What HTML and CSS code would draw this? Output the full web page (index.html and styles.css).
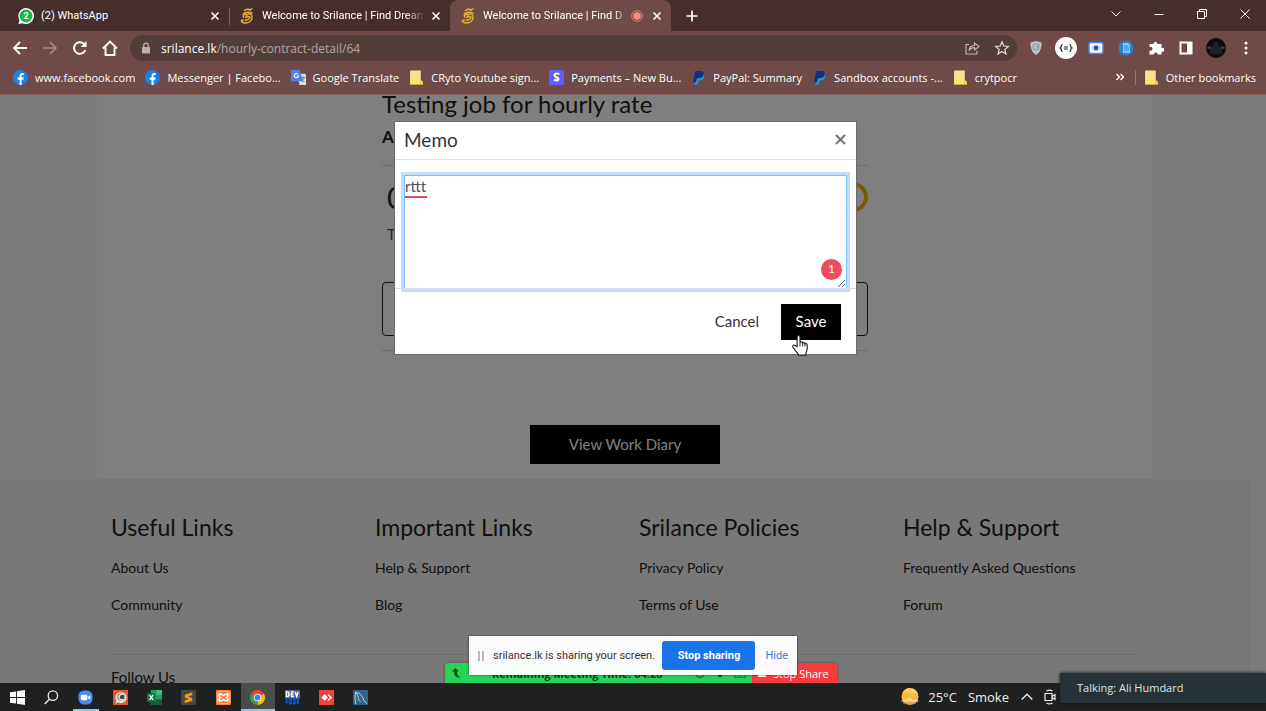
FILE: index.html
```html
<!DOCTYPE html>
<html lang="en">
<head>
  <meta charset="UTF-8" />
  <meta name="viewport" content="width=device-width, initial-scale=1.0"/>
  <title>Welcome to Srilance | Find Dream Jobs</title>
  <link rel="stylesheet" href="styles.css">
</head>
<body>
  <!-- shared icons -->
  <svg class="defs" aria-hidden="true">
    <symbol id="x" viewBox="0 0 10 10"><path d="M1.5 1.5l7 7M8.5 1.5l-7 7" fill="none" stroke="currentColor" stroke-width="1.6"/></symbol>
    <symbol id="facebook" viewBox="0 0 16 16"><circle cx="8" cy="8" r="8" fill="#1583ee"/><path d="M7 16v-5.600H5V8h2V6.300C7 4.200 8.200 3.100 10 3.100l1.500.1v2h-1c-1 0-1.300.6-1.300 1.200V8h2.200l-.4 2.400H9.200V16z" fill="#fff"/></symbol>
    <symbol id="folder" viewBox="0 0 12 14"><path d="M0 .5h10v9.500l2 1v2.500H0z" fill="#fbe08b"/><path d="M10 9l2 2v2.500H9z" fill="#f0c64d"/><path d="M0 13.500h12" stroke="#d8a82e"/></symbol>
    <symbol id="paypal" viewBox="0 0 14 14"><path d="M5 4h6.500c1.500 1 1 5.500-3.200 5.700H7L6.200 13.500H3z" fill="#2497d8"/><path d="M4 1h5c2.500 0 3.300 1.300 2.800 3.300C11.200 7 9.500 7.800 7 7.800H5.500L4.700 11.500H1.800z" fill="#10317f"/></symbol>
    <symbol id="srilance" viewBox="0 0 16 16"><path d="M5 3C6 1 10 .5 12 2.500M10 2.500L13.500.5M4 7c1-3.500 8-3.500 9.500-1.500M5 9.500C3.500 8 5 5.500 7 6.500s1 3-1 3M8.500 6.500c2-1.500 4.500-.5 4.500 2.500 0 4-3 6-6.500 6-3 0-4.500-1.500-4-2.500s2-.5 2.500 0M9 9.500C9 8 11 8 11 9.500S8 12 6 12.500" fill="none" stroke="#e5b431" stroke-width="1.400"/></symbol>
  </svg>

  <header class="browser">
    <nav class="tabs">
      <div class="tab">
        <svg class="favicon" viewBox="0 0 16 16"><path d="M8 0a8 8 0 1 1-3.500 15.200L.5 16l1-3.800A8 8 0 0 1 8 0z" fill="#fff"/><circle cx="8" cy="8" r="6.500" fill="#18b84a"/><text x="8" y="11.300" text-anchor="middle" font-size="9" font-weight="bold" fill="#fff">2</text></svg>
        <span class="tab-title">(2) WhatsApp</span>
        <button class="tab-close" aria-label="Close tab"><svg><use href="#x"/></svg></button>
      </div>
      <div class="tab divided">
        <svg class="favicon"><use href="#srilance"/></svg>
        <span class="tab-title fade">Welcome to Srilance | Find Dream</span>
        <button class="tab-close" aria-label="Close tab"><svg><use href="#x"/></svg></button>
      </div>
      <div class="tab active">
        <svg class="favicon"><use href="#srilance"/></svg>
        <span class="tab-title fade">Welcome to Srilance | Find D</span>
        <svg class="record" viewBox="0 0 12 12"><circle cx="6" cy="6" r="5.300" fill="none" stroke="#e8837a"/><circle cx="6" cy="6" r="3.800" fill="#f28b82"/></svg>
        <button class="tab-close" aria-label="Close tab"><svg><use href="#x"/></svg></button>
      </div>
      <button class="new-tab" aria-label="New tab"><svg viewBox="0 0 12 12"><path d="M6 .5v11M.5 6h11" stroke="#fff" stroke-width="1.700"/></svg></button>
      <div class="window-buttons">
        <button aria-label="Search tabs"><svg viewBox="0 0 12 12"><path d="M1.500 3.500L6 8l4.500-4.500"/></svg></button>
        <button aria-label="Minimize"><svg viewBox="0 0 12 12"><path d="M1.500 6.500h9"/></svg></button>
        <button aria-label="Restore"><svg viewBox="0 0 12 12"><path d="M1.500 3.500h7v7h-7zM3.500 3.500v-2h7v7h-2"/></svg></button>
        <button aria-label="Close"><svg viewBox="0 0 12 12"><path d="M1.500 1.500l9 9M10.500 1.500l-9 9"/></svg></button>
      </div>
    </nav>

    <div class="toolbar">
      <button class="tool" aria-label="Back"><svg viewBox="0 0 16 16"><path d="M15 8H2.500M8 2L2 8l6 6" fill="none" stroke="#fff" stroke-width="1.900"/></svg></button>
      <button class="tool" aria-label="Forward"><svg viewBox="0 0 16 16"><path d="M1 8h12.500M8 2l6 6-6 6" fill="none" stroke="#a38785" stroke-width="1.700"/></svg></button>
      <button class="tool" aria-label="Reload"><svg viewBox="0 0 16 16"><path d="M13.300 10A5.800 5.800 0 1 1 12 4" fill="none" stroke="#fff" stroke-width="1.900"/><path d="M14.500 1v6h-6z" fill="#fff"/></svg></button>
      <button class="tool" aria-label="Home"><svg viewBox="0 0 16 16"><path d="M3.500 7.500V15h9V7.500M1 8.500l7-7 7 7" fill="none" stroke="#fff" stroke-width="1.900"/></svg></button>
      <div class="address">
        <svg class="lock" viewBox="0 0 10 12"><path d="M1 5h8v6.500H1z" fill="#bcaeac"/><path d="M2.700 5V3.500a2.300 2.300 0 0 1 4.600 0V5" fill="none" stroke="#bcaeac" stroke-width="1.300"/></svg>
        <span class="url">srilance.lk<span>/hourly-contract-detail/64</span></span>
        <button class="tool" aria-label="Share"><svg viewBox="0 0 16 16"><path d="M5 4.500H2v9.500h11v-3.500M5 10.500c.5-3.500 2.500-5 5.500-5V3L15 6.500 10.500 10V7.500C8 7.500 6.500 8.500 5 10.500z" fill="none" stroke="#c9bab8" stroke-width="1.100"/></svg></button>
        <button class="tool" aria-label="Bookmark"><svg viewBox="0 0 16 16"><path d="M8 1.800l1.800 4.200 4.500.4-3.400 3 1 4.500L8 11.500l-3.900 2.400 1-4.500-3.400-3L6.200 6z" fill="none" stroke="#e6dddc" stroke-width="1.200"/></svg></button>
      </div>
      <button class="tool" aria-label="Brave shield"><svg viewBox="0 0 16 16"><path d="M8 1l5.500 1.500c.3 5-1 9.500-5.500 12.500C3.500 12 2.200 7.500 2.500 2.500z" fill="#b9c2cb"/><circle cx="8" cy="7" r="3" fill="none" stroke="#8e99a4" stroke-width="1.200"/><path d="M8 7h2" stroke="#7e8a96"/></svg></button>
      <button class="tool large" aria-label="JSON viewer"><svg viewBox="0 0 22 22"><circle cx="11" cy="11" r="11" fill="#fff"/><path d="M7.500 7.500c-2 0-.5 3-2.200 3.500 1.700.5.200 3.500 2.200 3.500M14.500 7.500c2 0 .5 3 2.200 3.500-1.700.5-.2 3.500-2.200 3.500M9 10h4M9 12h4" fill="none" stroke="#222" stroke-width="1.200"/></svg></button>
      <button class="tool" aria-label="Recorder"><svg viewBox="0 0 16 16"><rect x="1" y="2.500" width="14" height="11" rx="2" fill="#fff" stroke="#4285f4" stroke-width="1.500"/><rect x="3.500" y="5" width="9" height="6" fill="#d9e6fd"/><circle cx="8" cy="8" r="2.400" fill="#3048ce"/></svg></button>
      <button class="tool" aria-label="Docs"><svg viewBox="0 0 16 16"><circle cx="8" cy="8" r="7.500" fill="#2286d6"/><path d="M5 3h5l2 2v8H5z" fill="#82c7f6"/><path d="M6 6h4M6 8h5M6 10h5" stroke="#2286d6"/></svg></button>
      <button class="tool" aria-label="Extensions"><svg viewBox="0 0 16 16"><path d="M1.500 4h4a2 2 0 1 1 4 0h4v4a2 2 0 1 1 0 3.500v3H9.800a2 2 0 1 0-4 0H1.500v-4a2 2 0 1 0 0-3.500z" fill="#fff"/></svg></button>
      <button class="tool" aria-label="Side panel"><svg viewBox="0 0 16 16"><path d="M2.500 2.500h11v11h-11z" fill="none" stroke="#fff" stroke-width="2"/><path d="M9 2h5v12H9z" fill="#fff"/></svg></button>
      <button class="tool large" aria-label="Profile"><svg viewBox="0 0 22 22"><circle cx="11" cy="11" r="10" fill="#0e0d11"/><path d="M9 6.500a2 2 0 1 1 4 0V8l4 2v7H5v-7l4-2z" fill="#232228"/><path d="M2.500 11l3-.5M16.500 10.500l3 .5" stroke="#4c4950" stroke-width="2"/></svg></button>
      <button class="tool" aria-label="Menu"><svg viewBox="0 0 16 16"><g fill="#fff"><circle cx="8" cy="3" r="1.500"/><circle cx="8" cy="8" r="1.500"/><circle cx="8" cy="13" r="1.500"/></g></svg></button>
    </div>

    <nav class="bookmarks">
      <a href="#"><svg><use href="#facebook"/></svg>www.facebook.com</a>
      <a href="#"><svg><use href="#facebook"/></svg>Messenger | Facebo...</a>
      <a href="#"><svg viewBox="0 0 16 16"><path d="M6 4h9a1 1 0 0 1 1 1v11H9z" fill="#d7dce2"/><path d="M0 1a1 1 0 0 1 1-1h8l4 12H1a1 1 0 0 1-1-1z" fill="#4c82ee"/><path d="M7.500 4.500a2.300 2.300 0 1 0 .5 2H6" fill="none" stroke="#fff" stroke-width="1.100"/><path d="M10 8h5M12.500 7v1M14 8c-.5 2-1.500 3-3 4M11.500 10l2.500 3" fill="none" stroke="#647a94"/></svg>Google Translate</a>
      <a href="#"><svg><use href="#folder"/></svg>CRyto Youtube sign...</a>
      <a href="#"><svg viewBox="0 0 16 16"><rect width="16" height="16" rx="2" fill="#635bff"/><path d="M11 4.500C8.500 3.300 5.800 3.600 5.800 5.700c0 2.600 4.400 1.900 4.400 3.900 0 1.900-3.100 1.800-5 .6" fill="none" stroke="#fff" stroke-width="2.200"/></svg>Payments – New Bu...</a>
      <a href="#"><svg><use href="#paypal"/></svg>PayPal: Summary</a>
      <a href="#"><svg><use href="#paypal"/></svg>Sandbox accounts -...</a>
      <a href="#"><svg><use href="#folder"/></svg>crytpocr</a>
      <button class="more" aria-label="More bookmarks"><svg viewBox="0 0 10 10"><path d="M1.500 2l3 3-3 3M5.500 2l3 3-3 3" fill="none" stroke="#fff" stroke-width="1.400"/></svg></button>
      <a href="#" class="other"><svg><use href="#folder"/></svg>Other bookmarks</a>
    </nav>
  </header>

  <main class="page">
    <section class="contract">
      <div class="contract-inner">
        <h1>Testing job for hourly rate</h1>
        <p class="client">Al</p>
        <div class="timer">
          <span class="hours">0</span>
          <span class="toggle"></span>
        </div>
        <p class="today">T</p>
        <div class="memo-row">
          <div class="memo-box"></div>
        </div>
        <button class="diary">View Work Diary</button>
      </div>
    </section>

    <footer class="site-footer">
      <div class="footer-inner">
        <div class="footer-columns">
          <div>
            <h2>Useful Links</h2>
            <a href="#">About Us</a>
            <a href="#">Community</a>
          </div>
          <div>
            <h2>Important Links</h2>
            <a href="#">Help &amp; Support</a>
            <a href="#">Blog</a>
          </div>
          <div>
            <h2>Srilance Policies</h2>
            <a href="#">Privacy Policy</a>
            <a href="#">Terms of Use</a>
          </div>
          <div>
            <h2>Help &amp; Support</h2>
            <a href="#">Frequently Asked Questions</a>
            <a href="#">Forum</a>
          </div>
        </div>
        <p class="follow">Follow Us</p>
      </div>
    </footer>

    <div class="overlay">
      <div class="modal" role="dialog" aria-labelledby="memo-title">
        <div class="modal-header">
          <label id="memo-title" for="memo">Memo</label>
          <button class="modal-close" aria-label="Close"><svg><use href="#x"/></svg></button>
        </div>
        <div class="modal-body">
          <textarea id="memo" spellcheck="false">rttt</textarea>
          <span class="misspelled"></span>
          <span class="badge">1</span>
        </div>
        <div class="modal-footer">
          <button class="cancel">Cancel</button>
          <button class="save">Save</button>
          <svg class="pointer" viewBox="0 0 18 24"><path d="M6 13V3c0-2 3-2 3 0v6c.5-1.200 2.500-1 2.700.4.700-.8 2.300-.5 2.500.8.900-.6 2.300 0 2.300 1.300v4c0 2-1.500 3.500-1.500 6.500H7.500C6 18.500 3.500 17 1.500 13.500c-.7-1.500 1-2.500 2.500-1.500z" fill="#fff" stroke="#222" stroke-width="1.200"/><path d="M9 9v4M11.700 9.500v3.500M14.200 10.500V13" stroke="#222"/></svg>
        </div>
      </div>
    </div>
  </main>

  <div class="meeting">
    <div class="meeting-time">
      <svg viewBox="0 0 12 12"><path d="M1 4.500L4.500 1 8 4.500H5.800C5.800 8 7 9.500 10 10c-4 1.500-7-.5-7-5.500z" fill="#064d16"/></svg>
      <span>Remaining Meeting Time: 04:28</span>
      <svg viewBox="0 0 12 12"><circle cx="6" cy="6" r="4.500" fill="none" stroke="#13762f" stroke-width="1.300"/></svg>
      <svg viewBox="0 0 12 12"><path d="M2 1.500h8v5L6 11 2 6.500z" fill="#07591b"/></svg>
      <svg viewBox="0 0 14 12"><path d="M1 3h3l1-2h4l1 2h3v8H1zM5 6.500l2 2 3-3" fill="none" stroke="#13762f" stroke-width="1.300"/></svg>
    </div>
    <button class="stop-share"><span class="square"></span>Stop Share</button>
  </div>
  <div class="sharing">
    <span class="grip"></span>
    <span>srilance.lk is sharing your screen.</span>
    <button class="stop-sharing">Stop sharing</button>
    <a href="#">Hide</a>
  </div>

  <footer class="taskbar">
    <div class="apps">
      <button aria-label="Start"><svg viewBox="0 0 16 16"><path d="M0 2.500l6.500-1v6H0zM7.500 1.300L16 0v7.500H7.500zM0 8.500h6.500v6L0 13.500zM7.500 8.500H16V16l-8.500-1.300z" fill="#fff"/></svg></button>
      <button aria-label="Search"><svg viewBox="0 0 16 16"><circle cx="9.500" cy="6" r="5" fill="none" stroke="#eee" stroke-width="1.400"/><path d="M6 9.700L.8 15" stroke="#eee" stroke-width="1.500"/></svg></button>
      <button class="running" aria-label="Zoom"><svg viewBox="0 0 16 16"><rect x=".5" y=".5" width="15" height="15" rx="6" fill="#4a8cf7"/><rect x="3" y="5" width="7" height="6" rx="1.500" fill="#fff"/><path d="M10.500 7.500L13.200 5.500v5l-2.700-2z" fill="#fff"/></svg></button>
      <button aria-label="Recorder"><svg viewBox="0 0 16 16"><path d="M0 0h16v16H0z" fill="#e4582c"/><circle cx="8.500" cy="8" r="6" fill="#ddd"/><circle cx="8.500" cy="7.500" r="3.700" fill="#4b4440"/><path d="M11 5a3 3 0 1 0 0 5M3 14l3-3" fill="none" stroke="#eee" stroke-width="1.500"/></svg></button>
      <button aria-label="Excel"><svg viewBox="0 0 16 16"><path d="M4 0h12v16H4z" fill="#1d9f5d"/><path d="M10 0h6v5h-6z" fill="#35c481"/><path d="M4 10h12v6H4z" fill="#185c37"/><path d="M0 3.500h9v9H0z" fill="#107c41"/><path d="M2.700 5.500l3.800 5M6.500 5.500l-3.800 5" stroke="#fff" stroke-width="1.400"/></svg></button>
      <button aria-label="Sublime Text"><svg viewBox="0 0 16 16"><rect width="16" height="16" rx="1" fill="#474747"/><path d="M12 2.500v3L7.500 7l4.500 1.500v3L4 14v-3l4.500-1.500L4 8V5z" fill="#ff9800"/></svg></button>
      <button aria-label="XAMPP"><svg viewBox="0 0 16 16"><rect width="16" height="16" rx="1" fill="#ef7f33"/><rect x="1.500" y="1.500" width="13" height="13" rx="3" fill="none" stroke="#f9c49f"/><path d="M5.500 4.500h-2v2.500l1.500 1-1.500 1v2.500h2.500L8 10l2 1.500h2.500V9L11 8l1.500-1V4.500H10L8 6 6 4.500z" fill="none" stroke="#fff" stroke-width="1.700"/></svg></button>
      <button class="running current" aria-label="Chrome"><svg viewBox="0 0 16 16"><path d="M8 8L1.100 4A8 8 0 0 1 14.900 4z" fill="#e94335"/><path d="M8 8L14.900 4A8 8 0 0 1 8 16z" fill="#fbbc05"/><path d="M8 8L8 16A8 8 0 0 1 1.100 4z" fill="#34a353"/><circle cx="8" cy="8" r="4" fill="#fff"/><circle cx="8" cy="8" r="3.100" fill="#3a80f0"/></svg></button>
      <button aria-label="Dev-C++"><svg viewBox="0 0 16 16"><path d="M0 0h16v9H0z" fill="#5c6590"/><path d="M1.500 2v5h1c2.500 0 2.500-5 0-5zM9.500 2H7v5h2.500M7 4.500h2M11 2l1.500 5L14 2" fill="none" stroke="#fff" stroke-width="1.500"/><path d="M1 9h14v6l-3-1-2 2-2-2-3 2-2-2-2 1z" fill="#0b55cc"/><path d="M5 10.500H3v3h2M8 10v4M6 12h4M12 10v4" fill="none" stroke="#082354"/></svg></button>
      <button aria-label="AnyDesk"><svg viewBox="0 0 16 16"><path d="M0 0h16v16H0z" fill="#ef443b"/><path d="M6 4.500L9.500 8 6 11.500 2.500 8z" fill="#fff"/><path d="M9.500 4.700L12.800 8l-3.300 3.300" fill="none" stroke="#fff" stroke-width="1.400"/></svg></button>
      <button aria-label="MySQL Workbench"><svg viewBox="0 0 16 16"><rect width="16" height="16" rx="1" fill="#2d6686"/><path d="M3 15C2 10 2 5 3 2.500c5 0 7.500 5 8.500 8.500l3 3.500M3 2.500c2 2 2.500 5 3 8l2 2" fill="none" stroke="#c8dce6"/></svg></button>
    </div>
    <div class="tray">
      <svg class="weather" viewBox="0 0 20 20"><circle cx="10" cy="9.500" r="8.500" fill="#f8b838"/><path d="M3 5a8.500 8.500 0 0 1 15 2z" fill="#fbd264"/><path d="M1 14.500c1-2 4-2 5-1.500 1-3 6-3 7 0 3-.5 5 0 6 1.500z" fill="#efd2ae"/><path d="M3 16h13" stroke="#ce965c"/></svg>
      <span>25°C</span>
      <span>Smoke</span>
      <button aria-label="Show hidden icons"><svg viewBox="0 0 12 12"><path d="M.7 8.500L6 3.200l5.300 5.300" fill="none" stroke="#eee" stroke-width="1.300"/></svg></button>
      <button aria-label="Meet now"><svg viewBox="0 0 12 16"><path d="M1 4.500h7v7H1zM8 7.500l3-2v5l-3-2M2.500 2c2-1.300 4-1.300 6 0M2.500 14c2 1.300 4 1.300 6 0" fill="none" stroke="#eee" stroke-width="1.200"/></svg></button>
    </div>
  </footer>
  <div class="talking">Talking: Ali Humdard</div>
</body>
</html>
```

FILE: styles.css
```css
* {
  box-sizing: border-box;
}
body {
  display: flex;
  flex-direction: column;
  height: 100vh;
  margin: 0;
  overflow: hidden;
  font-family: "Open Sans", "Noto Sans", sans-serif;
  font-size: 11px;
  position: relative;
}
h1, h2, p {
  margin: 0;
  font-weight: normal;
}
a {
  color: inherit;
  text-decoration: none;
}
button {
  padding: 0;
  border: none;
  background: none;
  font: inherit;
  color: inherit;
  cursor: pointer;
}
svg {
  display: block;
  flex: none;
}
.defs {
  position: absolute;
  width: 0;
  height: 0;
}

/* browser */
.browser {
  flex: none;
  background: #6f4a48;
  border-bottom: 1px solid #855d5b;
  color: #fff;
}
.tabs {
  display: flex;
  height: 31px;
  padding-left: 8px;
  background: #462e2d;
  font-family: Roboto, sans-serif;
}
.tab {
  display: flex;
  align-items: center;
  flex: 0 1 221px;
  min-width: 0;
  padding: 0 9px 0 10px;
}
.tab.divided {
  background: linear-gradient(#7b6766, #7b6766) 0 8px / 1px 17px no-repeat;
}
.tab.active {
  background: #6f4a48;
  border-radius: 8px 8px 0 0;
}
.favicon {
  width: 16px;
  height: 16px;
  margin-right: 7px;
}
.tab-title {
  flex: 1;
  overflow: hidden;
  white-space: nowrap;
}
.tab-title.fade {
  mask-image: linear-gradient(to right, #000 88%, transparent);
}
.tab-close {
  margin-left: 6px;
}
.tab-close svg {
  width: 10px;
  height: 10px;
}
.record {
  width: 12px;
  height: 12px;
  margin: 0 3px 0 0;
}
.new-tab {
  width: 42px;
}
.new-tab svg {
  width: 12px;
  height: 12px;
  margin: auto;
}
.window-buttons {
  display: flex;
  margin-left: auto;
}
.window-buttons button {
  width: 43px;
  padding-bottom: 4px;
}
.window-buttons svg {
  width: 12px;
  height: 12px;
  margin: auto;
  fill: none;
  stroke: #fff;
}
.toolbar {
  display: flex;
  align-items: center;
  height: 34px;
  padding: 0 5px;
}
.tool {
  flex: none;
  width: 30px;
}
.tool svg {
  width: 16px;
  height: 16px;
  margin: auto;
}
.tool.large svg {
  width: 22px;
  height: 22px;
}
.address {
  display: flex;
  align-items: center;
  flex: 1;
  height: 26px;
  margin: 0 4px 0 5px;
  padding-left: 11px;
  border-radius: 13px;
  background: #533d3b;
}
.lock {
  width: 10px;
  height: 12px;
  margin-right: 10px;
}
.url {
  flex: 1;
  font-size: 12px;
}
.url span {
  color: #b5a5a3;
}
.bookmarks {
  display: flex;
  align-items: center;
  gap: 10px;
  height: 29px;
  padding: 0 10px 5px 13px;
  white-space: nowrap;
}
.bookmarks a {
  display: flex;
  align-items: center;
  gap: 7px;
}
.bookmarks a svg {
  width: 15px;
  height: 15px;
}
.more {
  margin-left: auto;
}
.more svg {
  width: 10px;
  height: 10px;
}
.bookmarks .other {
  padding-left: 8px;
  border-left: 1px solid #957a78;
}

/* page */
.page {
  flex: 1;
  min-height: 0;
  overflow: hidden;
  position: relative;
  padding-right: 16px;
  background: #f6f6f6;
  color: #222;
  font-family: Lato, "Open Sans", sans-serif;
}
.contract {
  max-width: 1056px;
  height: 384px;
  margin: 0 auto;
  background: #fff;
}
.contract-inner {
  width: 486px;
  max-width: 100%;
  margin: 0 auto;
}
.contract h1 {
  height: 20px;
  font-size: 24px;
  line-height: 17px;
}
.client {
  height: 51px;
  padding-top: 12px;
  border-bottom: 1px solid #d8d8d8;
  font-size: 17px;
  font-weight: bold;
  line-height: 20px;
}
.timer {
  display: flex;
  align-items: center;
  justify-content: space-between;
  height: 61px;
  padding-left: 5px;
}
.hours {
  font-size: 30px;
}
.toggle {
  width: 30px;
  height: 30px;
  border: 4px solid #f5b90f;
  border-radius: 50%;
}
.today {
  padding-left: 5px;
  color: #555;
  font-size: 15px;
  line-height: 14px;
}
.memo-row {
  padding: 41px 0 14px;
  border-bottom: 1px solid #d8d8d8;
}
.memo-box {
  height: 54px;
  border: 1px solid #222;
  border-radius: 4px;
}
.diary {
  display: block;
  width: 190px;
  height: 39px;
  margin: 74px auto 0;
  padding-bottom: 2px;
  background: #000;
  color: #fff;
  font-size: 15px;
}
.site-footer {
  background: #f0f0f0;
  height: 100%;
}
.footer-inner {
  max-width: 1056px;
  margin: 0 auto;
  padding: 32px 14px 0;
}
.footer-columns {
  display: grid;
  grid-template-columns: repeat(4, 1fr);
  column-gap: 28px;
  height: 144px;
  border-bottom: 1px solid #dcdcdc;
}
.footer-columns h2 {
  font-size: 23px;
  line-height: 32px;
  margin-bottom: 6px;
}
.footer-columns a {
  display: block;
  font-size: 14px;
  line-height: 37px;
}
.follow {
  margin-top: 11px;
  font-size: 15px;
  line-height: 22px;
}

/* memo dialog */
.overlay {
  position: absolute;
  inset: 0;
  display: flex;
  justify-content: center;
  align-items: flex-start;
  padding: 26px 15px 0 0;
  background: rgba(0, 0, 0, 0.5);
}
.modal {
  width: 463px;
  background: #fff;
  border: 1px solid #6b6b6b;
}
.modal-header {
  display: flex;
  align-items: center;
  justify-content: space-between;
  height: 38px;
  padding: 0 9px 3px;
  border-bottom: 1px solid #dee2e6;
  color: #333;
  font-size: 19px;
}
.modal-close {
  color: #777;
}
.modal-close svg {
  width: 13px;
  height: 13px;
}
.modal-body {
  position: relative;
  height: 128px;
  padding: 15px 9px 0;
}
.modal-body textarea {
  display: block;
  position: relative;
  width: 100%;
  height: 114px;
  padding: 1px 0;
  border: 1px solid #80bdff;
  outline: none;
  box-shadow: 0 0 0 3px #bfdeff;
  color: #495057;
  font-family: inherit;
  font-size: 15px;
  line-height: 18px;
}
.misspelled {
  position: absolute;
  left: 10px;
  top: 36px;
  width: 22px;
  height: 2px;
  background: #d9505c;
}
.badge {
  position: absolute;
  right: 14px;
  bottom: 8px;
  width: 21px;
  height: 21px;
  border-radius: 50%;
  background: #ef4b5d;
  color: #fff;
  font-size: 12px;
  line-height: 20px;
  text-align: center;
}
.modal-footer {
  display: flex;
  align-items: center;
  justify-content: flex-end;
  gap: 22px;
  position: relative;
  height: 66px;
  padding-right: 15px;
  border-top: 1px solid #dee2e6;
  color: #333;
  font-size: 15px;
}
.modal-footer button {
  height: 36px;
  padding-bottom: 2px;
}
.save {
  width: 60px;
  background: #000;
  color: #fff;
}
.pointer {
  position: absolute;
  right: 47px;
  top: 45px;
  width: 18px;
  height: 23px;
}

/* screen sharing bars */
.meeting {
  position: absolute;
  left: 445px;
  bottom: 28px;
  display: flex;
  height: 20px;
  border-radius: 4px 4px 0 0;
  overflow: hidden;
  box-shadow: 0 0 3px rgba(0, 0, 0, 0.4);
}
.meeting-time {
  display: flex;
  align-items: center;
  gap: 8px;
  width: 307px;
  padding: 0 6px;
  background: #24d657;
  color: #0b4019;
  font-weight: bold;
}
.meeting-time span {
  flex: 1;
  padding-left: 21px;
}
.meeting-time svg {
  width: 12px;
  height: 12px;
}
.stop-share {
  display: flex;
  align-items: center;
  gap: 7px;
  width: 85px;
  padding-left: 6px;
  background: #fb3b3b;
  color: #fff;
  white-space: nowrap;
}
.square {
  width: 8px;
  height: 8px;
  background: #fff;
}
.sharing {
  position: absolute;
  left: 469px;
  bottom: 36px;
  display: flex;
  align-items: center;
  width: 328px;
  height: 39px;
  padding: 0 9px;
  background: rgba(255, 255, 255, 0.97);
  box-shadow: 0 0 2px rgba(0, 0, 0, 0.7);
  color: #333;
  font-family: Roboto, sans-serif;
  white-space: nowrap;
}
.grip {
  width: 6px;
  height: 10px;
  margin-right: 9px;
  border: solid #b5b5b5;
  border-width: 0 2px;
}
.stop-sharing {
  width: 93px;
  height: 29px;
  margin: 0 10px 0 auto;
  border-radius: 3px;
  background: #1a73e8;
  color: #fff;
  font-weight: bold;
}
.sharing a {
  color: #3b78e7;
}

/* taskbar */
.taskbar {
  display: flex;
  flex: none;
  align-items: center;
  height: 28px;
  background: #1f2020;
  color: #f0f0f0;
  font-size: 13px;
}
.apps {
  display: flex;
  width: 378px;
  height: 100%;
}
.apps button {
  flex: 1;
}
.apps svg {
  width: 15px;
  height: 15px;
  margin: auto;
}
.apps .running {
  background: linear-gradient(#8fc6e8, #8fc6e8) center bottom / 26px 2px no-repeat;
}
.apps .current {
  background: linear-gradient(#8fc6e8, #8fc6e8) center bottom / 100% 2px no-repeat #4b4c4c;
}
.tray {
  display: flex;
  align-items: center;
  gap: 11px;
  margin-left: auto;
  margin-right: 210px;
}
.tray svg {
  width: 12px;
  height: 16px;
}
.tray .weather {
  width: 20px;
  height: 20px;
  margin-right: -3px;
}
.tray button {
  margin-left: 1px;
}
.tray button + button {
  margin-left: 0;
}
.talking {
  position: absolute;
  right: 0;
  bottom: 8px;
  width: 206px;
  height: 30px;
  padding-left: 17px;
  background: #263238;
  box-shadow: 0 0 3px #111;
  color: #dfe3e5;
  line-height: 30px;
}
```
